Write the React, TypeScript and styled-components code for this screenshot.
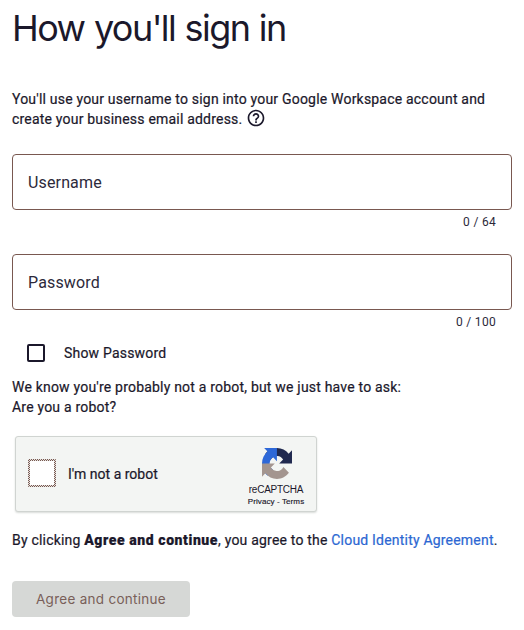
import React from "react";
import styled, { createGlobalStyle } from "styled-components";

const Global = createGlobalStyle`
  * { box-sizing: border-box; }
  body { margin: 0; background: #fff; color: #1b182b; font-family: Roboto, sans-serif; font-size: 14px; }
`;
const Page = styled.main`
  display: flex; flex-direction: column; width: 524px; height: 630px; padding: 8px 12px 0; overflow: hidden;
`;
const Title = styled.h1`
  margin: 0; height: 40px; font: 400 36px/40px "Inter", sans-serif; letter-spacing: -1.55px; word-spacing: 0.8px; white-space: nowrap;
`;
const Copy = styled.p<{ $top: number }>`
  margin: ${(p) => p.$top}px 0 0; line-height: 20px; letter-spacing: 0.2px; white-space: nowrap;
  -webkit-text-stroke: 0.2px currentColor;
`;
const Intro = styled(Copy)`
  height: 40px;
`;
const HelpIcon = styled.svg`
  width: 20px; height: 20px; margin: -1px 0 0 4px; vertical-align: -4px; fill: currentColor;
`;
const Field = styled.label<{ $gap: number }>`
  display: flex; align-items: center; width: 500px; height: 56px; margin-top: ${(p) => p.$gap}px; padding: 0 15px;
  border: 1px solid #795850; border-radius: 4px; font-size: 16px; letter-spacing: 0.15px; color: #2c293a;
`;
const Counter = styled.div`
  height: 24px; padding-right: 16px; line-height: 24px; font-size: 12px; letter-spacing: 0.3px; text-align: right; color: #2c293a;
`;
const CheckRow = styled.div`
  display: flex; align-items: center; gap: 19px; height: 20px; margin: 9px 0 0 15px; letter-spacing: 0.2px;
  -webkit-text-stroke: 0.2px currentColor;
`;
const Box = styled.span`
  width: 18px; height: 18px; border: 2px solid #1b182b; border-radius: 2px;
`;
const Captcha = styled.section`
  display: flex; align-items: center; width: 302px; height: 76px; margin: 19px 0 0 3px; padding: 0 2px 0 12px;
  background: #f3f5f3; border: 1px solid #d0d4d1; border-radius: 3px; box-shadow: 0 1px 2px #d9dcd9;
`;
const CaptchaBox = styled.span`
  width: 28px; height: 28px; margin: -2px 12px 0 0; padding: 2px; border-radius: 1px;
  background:
    linear-gradient(#fff, #fff) content-box,
    repeating-conic-gradient(#795850 0 25%, #e4e2df 0 50%) 0 0 / 2px 2px;
`;
const CaptchaLabel = styled.span`
  -webkit-text-stroke: 0.2px currentColor;
`;
const Brand = styled.div`
  display: flex; flex-direction: column; align-items: center; width: 72px; height: 74px; padding-top: 11px;
  margin-left: auto; margin-right: 2px;
`;
const Logo = styled.svg`
  width: 30px; height: 31px; margin-left: 2px;
`;
const BrandName = styled.span`
  margin-top: 5px; font: 10px/12px "Liberation Sans", sans-serif; letter-spacing: -0.25px; white-space: nowrap;
`;
const BrandLinks = styled.span`
  font: 8px/11px "Liberation Sans", sans-serif; letter-spacing: 0.1px; white-space: nowrap; -webkit-text-stroke: 0.15px currentColor;
`;
const Strong = styled.b`
  font-weight: 900; letter-spacing: 0.58px;
`;
const Link = styled.a`
  color: #2c67d2;
`;
const Submit = styled.button`
  width: 178px; height: 36px; margin-top: 31px; padding: 0; border: 0; border-radius: 4px; background: #d6d8d6; color: #795f59;
  font: 400 13.5px Inter, sans-serif; letter-spacing: 0.28px;
`;

export default function App() {
  return (
    <Page>
      <Global />
      <Title>How you'll sign in</Title>
      <Intro $top={41}>
        You'll use your username to sign into your Google Workspace account and<br />
        create your business email address.
        <HelpIcon viewBox="0 0 24 24"><path d="M11 18h2v-2h-2v2zm1-16C6.48 2 2 6.48 2 12s4.48 10 10 10 10-4.48 10-10S17.52 2 12 2zm0 18c-4.41 0-8-3.59-8-8s3.59-8 8-8 8 3.59 8 8-3.59 8-8 8zm0-14c-2.21 0-4 1.79-4 4h2c0-1.1.9-2 2-2s2 .9 2 2c0 2-3 1.75-3 5h2c0-2.25 3-2.5 3-5 0-2.21-1.79-4-4-4z" /></HelpIcon>
      </Intro>
      <Field $gap={25}>Username</Field>
      <Counter>0 / 64</Counter>
      <Field $gap={20}>Password</Field>
      <Counter>0 / 100</Counter>
      <CheckRow><Box />Show Password</CheckRow>
      <Copy $top={14}>We know you're probably not a robot, but we just have to ask:<br />Are you a robot?</Copy>
      <Captcha>
        <CaptchaBox />
        <CaptchaLabel>I'm not a robot</CaptchaLabel>
        <Brand>
          <Logo viewBox="0 0 64 64" preserveAspectRatio="none">
            <path fill="#20294f" d="M64 31.955l-.033-1.37V4.687l-7.16 7.16C50.948 4.674 42.033.093 32.05.093c-10.4 0-19.622 4.96-25.458 12.64l11.736 11.86a15.55 15.55 0 0 1 4.754-5.334c2.05-1.6 4.952-2.906 8.968-2.906.485 0 .86.057 1.135.163 4.976.393 9.288 3.14 11.828 7.124l-8.307 8.307L64 31.953" />
            <path fill="#2d68d8" d="M31.862.094l-1.37.033H4.594l7.16 7.16C4.58 13.147 0 22.06 0 32.046c0 10.4 4.96 19.622 12.64 25.458L24.5 45.768a15.55 15.55 0 0 1-5.334-4.754c-1.6-2.05-2.906-4.952-2.906-8.968 0-.485.057-.86.163-1.135.393-4.976 3.14-9.288 7.124-11.828l8.307 8.307L31.86.095" />
            <path fill="#a3958f" d="M.001 32.045l.033 1.37v25.898l7.16-7.16c5.86 7.173 14.774 11.754 24.76 11.754 10.4 0 19.622-4.96 25.458-12.64l-11.736-11.86a15.55 15.55 0 0 1-4.754 5.334c-2.05 1.6-4.952 2.906-8.968 2.906-.485 0-.86-.057-1.135-.163-4.976-.393-9.288-3.14-11.828-7.124l8.307-8.307c-10.522.04-22.4.066-27.295-.005" />
          </Logo>
          <BrandName>reCAPTCHA</BrandName>
          <BrandLinks>Privacy - Terms</BrandLinks>
        </Brand>
      </Captcha>
      <Copy $top={18}>By clicking <Strong>Agree and continue</Strong>, you agree to the <Link>Cloud Identity Agreement</Link>.</Copy>
      <Submit>Agree and continue</Submit>
    </Page>
  );
}
